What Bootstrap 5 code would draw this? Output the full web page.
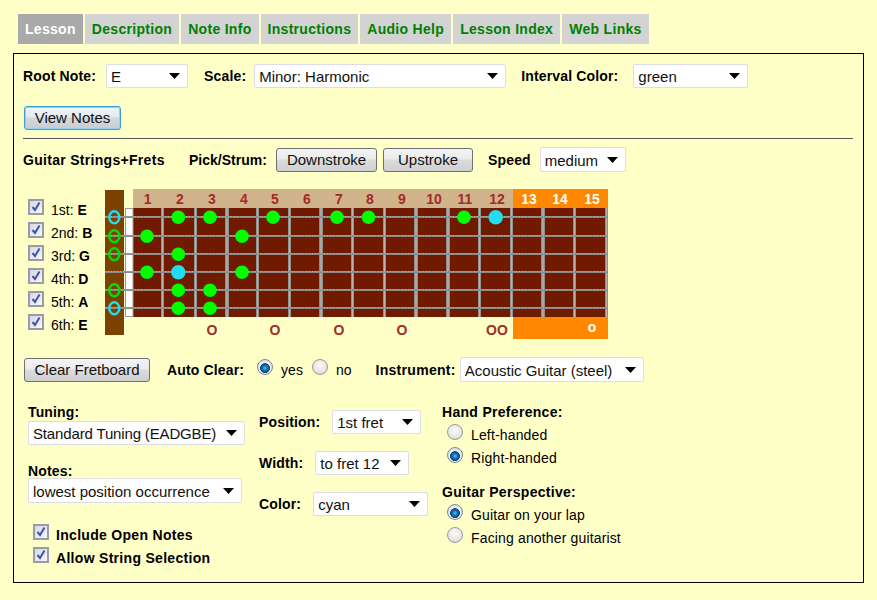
<!DOCTYPE html>
<html lang="en">
<head>
    <meta charset="UTF-8">
    <meta name="viewport" content="width=device-width, initial-scale=1.0">
    <title>Guitar Scales</title>
    <link href="https://cdn.jsdelivr.net/npm/bootstrap@5.3.0/dist/css/bootstrap.min.css" rel="stylesheet">
    <style>
        body { background: #ffffc8; color: #000; font-family: "Liberation Sans", Arial, sans-serif; font-size: 14px; line-height: 16px; margin: 0; }
        .tab-bar { padding: 14px 0 0 18px; gap: 2px; }
        .tab-bar .nav-link { background: #d3d3d3; color: #008000; font-weight: 700; font-size: 14px; line-height: 30px; padding: 0 7px; letter-spacing: .3px; border-radius: 0; }
        .tab-bar .nav-link.active { background: #a9a9a9; color: #fff; }
        .lesson-box { margin: 9px 13px 0; width: 851px; height: 530px; border: 1px solid #000; padding: 10px 9px 0 9px; }
        .lbl { font-weight: 700; letter-spacing: .15px; white-space: nowrap; }
        .lbl.wide { letter-spacing: .3px; }
        .lbl.tight { letter-spacing: 0; }
        .opt-text { letter-spacing: .15px; }
        .form-select.pick { font-size: 15px; line-height: 18px; padding: 3px 18px 1px 4px; height: 24px; color: #111; border: 1px solid #dcdce6; border-radius: 2px; box-shadow: none; background-color: #fff; background-size: 11px 6px; background-position: right 7px center; background-image: url("data:image/svg+xml,%3Csvg xmlns='http://www.w3.org/2000/svg' viewBox='0 0 11 6'%3E%3Cpath d='M0 0h11L5.5 6z' fill='%23000'/%3E%3C/svg%3E"); }
        .form-select.pick.tall { height: 25px; }
        .form-select.pick.snug { letter-spacing: -.15px; }
        .btn.ie-btn { font-size: 15px; line-height: 18px; padding: 2px 0; height: 24px; color: #111; border: 1px solid #707070; border-radius: 3px; background: linear-gradient(#f3f3f3 0, #ebebeb 45%, #dcdcdc 50%, #cfcfcf 100%); }
        .btn.ie-btn.focused { border-color: #3c9fd0; box-shadow: inset 0 0 0 1px #8fd4f2; background: linear-gradient(#eef6fb 0, #e4e9ec 45%, #d3d8db 50%, #c6cdd1 100%); }
        .view-row { margin: 18px 0 0 1px; }
        .rule { margin: 8px 0 0 0; width: 830px; height: 1px; background: #555; border: 0; opacity: 1; }
        .strum-row { margin-top: 8px; height: 25px; }
        .fret-row { margin-top: 17px; height: 150px; }
        .string-col { width: 82px; padding: 9px 0 0 5px; }
        .string-item { height: 23px; gap: 7px; }
        .ie-check { appearance: none; -webkit-appearance: none; width: 16px; height: 16px; margin: 0 0 6px 0; flex: none; border: 2px solid #9a9baa; background: url("data:image/svg+xml,%3Csvg xmlns='http://www.w3.org/2000/svg' viewBox='0 0 12 12'%3E%3Cpath d='M2.5 6l2.5 3L9.5 1.5' fill='none' stroke='%233f54a6' stroke-width='2'/%3E%3C/svg%3E") center no-repeat, linear-gradient(135deg, #d6d8e4, #f6f6fa); }
        .ie-radio { appearance: none; -webkit-appearance: none; width: 16px; height: 16px; margin: 0 0 6px 0; flex: none; border: 1px solid #9a9a9a; border-radius: 50%; background: radial-gradient(circle at 50% 40%, #fbfbfb 0, #e6e6e6 60%, #c4c4c4 100%); }
        .ie-radio:checked { border-color: #7d8a96; background: radial-gradient(circle at 50% 58%, #48bdf0 0, #0f78b8 2.5px, #123c68 4.6px, #f4f6f8 5.2px, #dfe2e6 7px); }
        .fret-svg { display: block; }
        .fret-svg text { font-family: "Liberation Sans", Arial, sans-serif; font-weight: 700; font-size: 14px; text-anchor: middle; }
        .clear-row { margin: 18px 0 0 1px; height: 25px; }
        .lower-area { margin-top: 22px; }
        .lower-one { width: 236px; padding-left: 5px; }
        .lower-two { width: 183px; margin-top: -3px; }
        .radio-item { height: 23px; gap: 8px; padding-left: 5px; }
        .radio-group { margin-top: 3px; }
        .check-item { height: 23px; gap: 7px; padding-left: 5px; }
        .sel-line { height: 41px; }
    </style>
</head>
<body>
    <nav class="nav tab-bar">
        <a class="nav-link active" href="#">Lesson</a>
        <a class="nav-link" href="#">Description</a>
        <a class="nav-link" href="#">Note Info</a>
        <a class="nav-link" href="#">Instructions</a>
        <a class="nav-link" href="#">Audio Help</a>
        <a class="nav-link" href="#">Lesson Index</a>
        <a class="nav-link" href="#">Web Links</a>
    </nav>

    <div class="lesson-box">
        <div class="d-flex align-items-center">
            <span class="lbl">Root Note:</span>
            <select class="form-select pick" style="width:82px;margin-left:10px"><option>E</option></select>
            <span class="lbl" style="margin-left:16px">Scale:</span>
            <select class="form-select pick" style="width:252px;margin-left:8px"><option>Minor: Harmonic</option></select>
            <span class="lbl" style="margin-left:15px">Interval Color:</span>
            <select class="form-select pick" style="width:115px;margin-left:15px"><option>green</option></select>
        </div>

        <div class="view-row">
            <button class="btn ie-btn focused" style="width:97px">View Notes</button>
        </div>
        <hr class="rule">

        <div class="d-flex align-items-center strum-row">
            <span class="lbl wide" style="width:166px">Guitar Strings+Frets</span>
            <span class="lbl tight" style="width:87px">Pick/Strum:</span>
            <button class="btn ie-btn" style="width:101px">Downstroke</button>
            <button class="btn ie-btn" style="width:90px;margin-left:6px">Upstroke</button>
            <span class="lbl" style="margin-left:15px">Speed</span>
            <select class="form-select pick tall" style="width:86px;margin-left:9px"><option>medium</option></select>
        </div>

        <div class="d-flex fret-row">
            <div class="string-col" id="stringCol"></div>
            <svg class="fret-svg" id="board" width="503" height="150" viewBox="105 189 503 150"></svg>
        </div>

        <div class="d-flex align-items-center clear-row">
            <button class="btn ie-btn" style="width:126px">Clear Fretboard</button>
            <span class="lbl" style="margin-left:17px">Auto Clear:</span>
            <input class="ie-radio" type="radio" name="auto" checked style="margin-left:13px">
            <span style="margin-left:8px">yes</span>
            <input class="ie-radio" type="radio" name="auto" style="margin-left:9px">
            <span style="margin-left:8px">no</span>
            <span class="lbl wide" style="margin-left:24px">Instrument:</span>
            <select class="form-select pick tall" style="width:184px;margin-left:4px"><option>Acoustic Guitar (steel)</option></select>
        </div>

        <div class="d-flex lower-area">
            <div class="lower-one">
                <div class="lbl">Tuning:</div>
                <select class="form-select pick snug" style="width:217px;margin-top:1px"><option>Standard Tuning (EADGBE)</option></select>
                <div class="lbl" style="margin-top:18px">Notes:</div>
                <select class="form-select pick tall" style="width:214px;margin-top:-1px"><option>lowest position occurrence</option></select>
                <div class="d-flex align-items-center check-item" style="margin-top:20px">
                    <input class="ie-check" type="checkbox" checked><span class="lbl wide">Include Open Notes</span>
                </div>
                <div class="d-flex align-items-center check-item">
                    <input class="ie-check" type="checkbox" checked><span class="lbl wide">Allow String Selection</span>
                </div>
            </div>
            <div class="lower-two">
                <div class="d-flex align-items-center sel-line">
                    <span class="lbl">Position:</span>
                    <select class="form-select pick" style="width:89px;margin-left:12px"><option>1st fret</option></select>
                </div>
                <div class="d-flex align-items-center sel-line">
                    <span class="lbl">Width:</span>
                    <select class="form-select pick" style="width:94px;margin-left:12px"><option>to fret 12</option></select>
                </div>
                <div class="d-flex align-items-center sel-line">
                    <span class="lbl">Color:</span>
                    <select class="form-select pick" style="width:115px;margin-left:12px"><option>cyan</option></select>
                </div>
            </div>
            <div>
                <div class="lbl wide">Hand Preference:</div>
                <div class="radio-group">
                    <div class="d-flex align-items-center radio-item"><input class="ie-radio" type="radio" name="hand"><span class="opt-text">Left-handed</span></div>
                    <div class="d-flex align-items-center radio-item"><input class="ie-radio" type="radio" name="hand" checked><span class="opt-text">Right-handed</span></div>
                </div>
                <div class="lbl wide" style="margin-top:15px">Guitar Perspective:</div>
                <div class="radio-group">
                    <div class="d-flex align-items-center radio-item"><input class="ie-radio" type="radio" name="view" checked><span class="opt-text">Guitar on your lap</span></div>
                    <div class="d-flex align-items-center radio-item"><input class="ie-radio" type="radio" name="view"><span class="opt-text">Facing another guitarist</span></div>
                </div>
            </div>
        </div>
    </div>

    <script src="https://cdn.jsdelivr.net/npm/bootstrap@5.3.0/dist/js/bootstrap.bundle.min.js"></script>
    <script>
        const strings = [['1st', 'E'], ['2nd', 'B'], ['3rd', 'G'], ['4th', 'D'], ['5th', 'A'], ['6th', 'E']];
        document.getElementById('stringCol').innerHTML = strings.map(s =>
            `<div class="d-flex align-items-center string-item"><input class="ie-check" type="checkbox" checked><span>${s[0]}: <b>${s[1]}</b></span></div>`
        ).join('');

        const stringY = [217, 236, 254, 272, 290, 308];
        const fretX = [161, 194, 225, 256, 288, 319, 351, 383, 414, 446, 478, 510, 541, 573, 605];
        const fretW = [3, 3, 4, 3, 3, 4, 3, 3, 4, 4, 3, 3, 4, 3, 3];
        const numX = [147.7, 180, 212, 244, 275, 307, 339, 370, 402, 434, 465, 497, 529, 560, 592];
        const green = [[178.3, 0], [210, 0], [273, 0], [337, 0], [368.5, 0], [464, 0], [147, 1], [242, 1], [178.3, 2], [147, 3], [242, 3], [178.3, 4], [210, 4], [178.3, 5], [210, 5]];
        const cyan = [[495.7, 0], [178.3, 3]];
        const open = [[0, '#22ddf0'], [1, '#00e000'], [2, '#00e000'], [4, '#00e000'], [5, '#22ddf0']];

        let svg = '<defs><linearGradient id="fretMetal"><stop offset="0" stop-color="#808080"/><stop offset=".5" stop-color="#b4b4b4"/><stop offset="1" stop-color="#808080"/></linearGradient></defs>';
        svg += '<rect x="105" y="190" width="19" height="145" fill="#7a4100"/>';
        svg += '<rect x="133" y="189" width="380" height="19" fill="#d2b48c"/>';
        svg += '<rect x="513" y="189" width="95" height="19" fill="#ff8800"/>';
        svg += '<rect x="133" y="208" width="475" height="109" fill="#701a00"/>';
        svg += '<rect x="513" y="317" width="95" height="22" fill="#ff8800"/>';
        svg += '<rect x="125.5" y="208.5" width="7.5" height="108" fill="#fff" stroke="#999"/>';
        fretX.forEach((x, i) => {
            svg += `<rect x="${x}" y="208" width="${fretW[i]}" height="109" fill="url(#fretMetal)"/>`;
        });
        stringY.forEach(y => {
            svg += `<line x1="105" y1="${y}" x2="608" y2="${y}" stroke="#8a8a8a" stroke-width="2"/>`;
            svg += `<line x1="105" y1="${y - .5}" x2="608" y2="${y - .5}" stroke="#b0b0b0" stroke-width="1" stroke-dasharray="1 2"/>`;
        });
        numX.forEach((x, i) => {
            svg += `<text x="${x}" y="204" fill="${i > 11 ? '#fff' : '#a52a2a'}">${i + 1}</text>`;
        });
        green.forEach(d => {
            svg += `<circle cx="${d[0]}" cy="${stringY[d[1]] + .3}" r="6.8" fill="#00ff00"/>`;
        });
        cyan.forEach(d => {
            svg += `<circle cx="${d[0]}" cy="${stringY[d[1]] + .3}" r="7.2" fill="#22ddf0"/>`;
        });
        open.forEach(d => {
            svg += `<ellipse cx="114.3" cy="${stringY[d[0]] + .3}" rx="5" ry="6" fill="none" stroke="${d[1]}" stroke-width="2.4"/>`;
        });
        [212, 275, 339, 402].forEach(x => {
            svg += `<text x="${x}" y="335" fill="#a52a2a">O</text>`;
        });
        svg += '<text x="497" y="335" fill="#a52a2a">OO</text>';
        svg += '<text x="592" y="332" fill="#fff">o</text>';
        document.getElementById('board').innerHTML = svg;
    </script>
</body>
</html>
